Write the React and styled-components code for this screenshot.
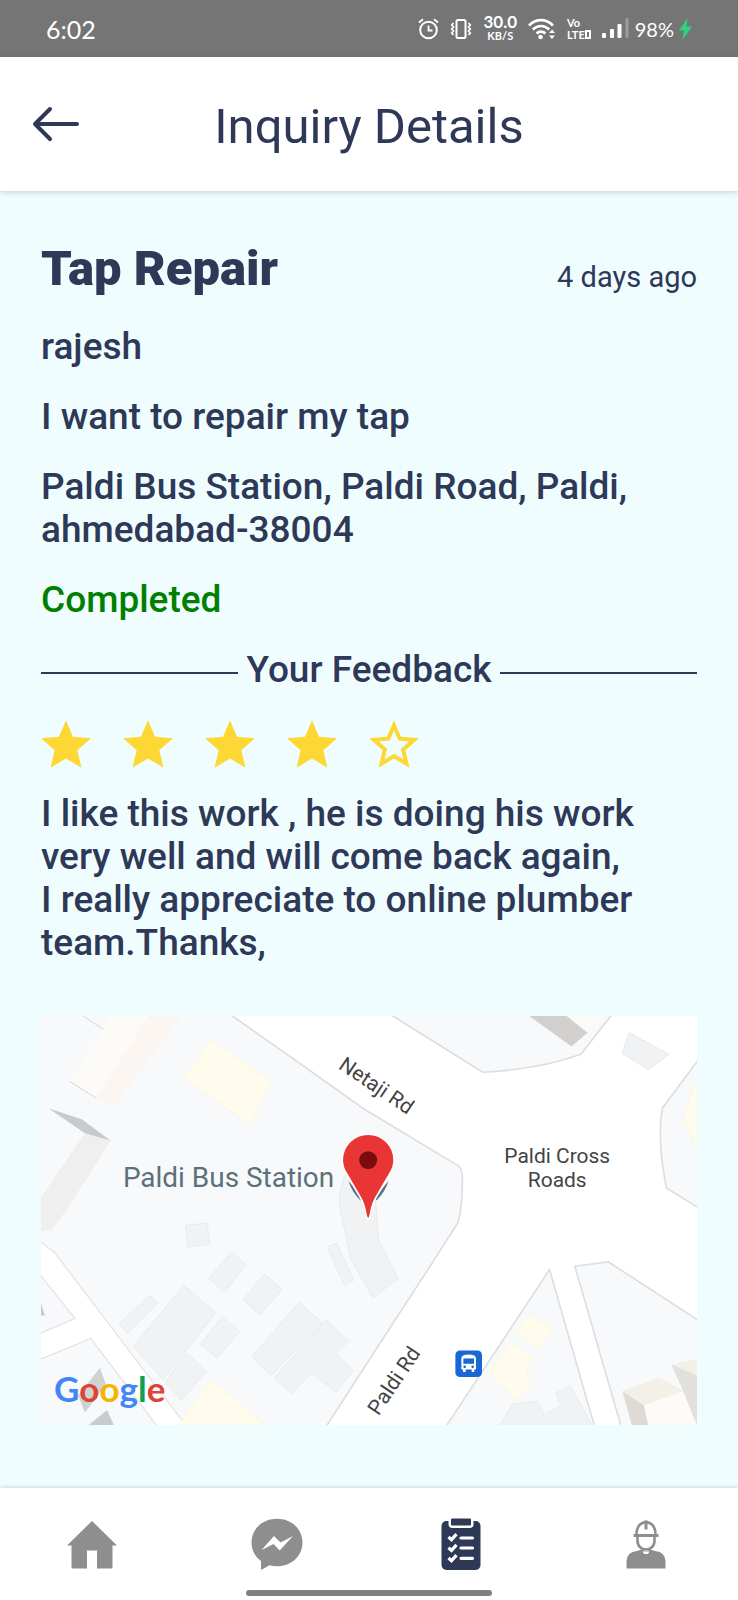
import React from "react"
import styled, { createGlobalStyle } from "styled-components"

const GlobalStyle = createGlobalStyle`
  * {
    box-sizing: border-box;
  }

  body {
    margin: 0;
    background: #f0fdff;
    color: #2e3857;
    font-family: Roboto, "Liberation Sans", sans-serif;
  }
`

const Page = styled.div`
  min-height: 100vh;
  display: flex;
  flex-direction: column;
`

/* status bar */

const StatusBar = styled.div`
  height: 57px;
  padding: 0 46px;
  display: flex;
  align-items: center;
  justify-content: space-between;
  background: #757575;
  color: #fff;
  font-family: Lato, sans-serif;
`

const Clock = styled.span`
  font-size: 25px;
  line-height: 32px;
`

const StatusIcons = styled.div`
  display: flex;
  align-items: center;
  gap: 11px;
`

const Stacked = styled.span`
  display: flex;
  flex-direction: column;
  align-items: ${(props) => props.$align || "center"};
  font-size: 11px;
  line-height: ${(props) => props.$line}px;
  font-weight: 700;
`

const Speed = styled.span`
  font-size: 17px;
`

const LteRow = styled.span`
  display: flex;
  align-items: center;
`

const SimBox = styled.span`
  width: 6px;
  height: 9px;
  border: 2px solid #fff;
`

const Battery = styled.span`
  display: flex;
  align-items: center;
  gap: 5px;
  font-size: 20px;
  line-height: 24px;
`

const SignalGroup = styled.span`
  display: flex;
  align-items: center;
  gap: 6px;
`

/* header */

const Header = styled.header`
  height: 134px;
  padding: 0 28px;
  display: grid;
  grid-template-columns: 1fr auto 1fr;
  align-items: center;
  position: relative;
  background: #fff;
  box-shadow: 0 1px 6px rgba(40, 80, 80, 0.25);
`

const BackButton = styled.button`
  justify-self: start;
  display: flex;
  padding: 4px;
  border: 0;
  background: none;
  color: #2e3857;
  cursor: pointer;
`

const Title = styled.h1`
  margin: 0;
  padding-top: 6px;
  font-size: 49px;
  line-height: 58px;
  font-weight: 400;
`

/* details */

const Content = styled.main`
  flex: 1;
  padding: 49px 41px 62px;
`

const Details = styled.section`
  display: flex;
  flex-direction: column;
  gap: 27px;
`

const TitleRow = styled.div`
  display: flex;
  align-items: flex-end;
  justify-content: space-between;
`

const Service = styled.h2`
  margin: 0;
  font-size: 49px;
  line-height: 58px;
  font-weight: 900;
`

const Ago = styled.time`
  font-size: 29px;
  line-height: 42px;
`

const Text = styled.p`
  margin: 0;
  font-size: 37px;
  line-height: 43px;
  font-weight: 500;
  white-space: pre-line;
  color: ${(props) => props.$color || "inherit"};
`

const Divider = styled.div`
  display: flex;
  align-items: center;
  gap: 8px;
  padding-bottom: 2px;

  &::before,
  &::after {
    content: "";
    flex: 1;
    height: 2px;
    margin-top: 6px;
    background: #2e3857;
  }
`

const DividerTitle = styled.h3`
  margin: 0;
  font-size: 37px;
  line-height: 43px;
  font-weight: 500;
`

const Stars = styled.div`
  display: flex;
  gap: 32px;
  margin-bottom: -3px;
`

const MapBox = styled.div`
  margin-top: 52px;

  svg {
    display: block;
    width: 100%;
    height: auto;
  }
`

const MapLabel = styled.text`
  font-family: Roboto, "Liberation Sans", sans-serif;
  font-size: ${(props) => props.$size || 21}px;
  fill: ${(props) => props.$color || "#444"};
  text-anchor: ${(props) => props.$anchor || "start"};
`

const GoogleMark = styled.text`
  font-family: Lato, sans-serif;
  font-size: 35px;
  font-weight: 700;
`

/* bottom tabs */

const Footer = styled.footer`
  height: 112px;
  display: flex;
  flex-direction: column;
  align-items: center;
  justify-content: space-between;
  position: relative;
  padding: 30px 0 4px;
  background: #fff;
  box-shadow: 0 -1px 4px rgba(40, 60, 60, 0.18);
`

const Tabs = styled.nav`
  width: 100%;
  display: grid;
  grid-template-columns: repeat(4, 1fr);
`

const Tab = styled.a`
  display: flex;
  justify-content: center;
  color: ${(props) => (props.$active ? "#2e3857" : "#8e8e8e")};
`

const HomeIndicator = styled.div`
  width: 33.3%;
  height: 6px;
  border-radius: 3px;
  background: #808080;
`

const AlarmIcon = () => (
  <svg width="21" height="22" viewBox="0 0 21 22" fill="none" stroke="#fff" strokeWidth="2">
    <circle cx="10.5" cy="12" r="8.3" />
    <path d="M10.5 7.5v5h4M1 4.5 5 1.3M20 4.5l-4-3.2" strokeWidth="1.8" />
  </svg>
)

const VibrateIcon = () => (
  <svg width="22" height="20" viewBox="0 0 22 20" fill="none" stroke="#fff">
    <rect x="6.5" y="1" width="9" height="18" rx="1.5" strokeWidth="2" />
    <path d="m3.5 4-1.8 2 1.8 2-1.8 2 1.8 2-1.8 2 1.8 2M18.5 4l1.8 2-1.8 2 1.8 2-1.8 2 1.8 2-1.8 2" strokeWidth="1.7" />
  </svg>
)

const WifiIcon = () => (
  <svg width="28" height="22" viewBox="0 0 28 22" fill="none" stroke="#fff" strokeWidth="2.7">
    <path d="M1 7.5c7-7.2 17-7.2 24 0M4.8 11.5c5-4.7 11.4-4.7 16.4 0M8.5 15.4c3-2.5 6-2.5 9 0" />
    <circle cx="12.5" cy="19" r="2.3" fill="#fff" stroke="none" />
    <path d="m21 15 3-3.5 3 3.5zM21 17.5l3 3.5 3-3.5z" fill="#fff" stroke="none" />
  </svg>
)

const SignalIcon = () => (
  <svg width="27" height="21" viewBox="0 0 27 21" fill="#fff">
    <rect x="0" y="15" width="4" height="5" rx="1" />
    <rect x="8" y="11" width="4" height="9" rx="1" />
    <rect x="15.5" y="6" width="4" height="14" rx="1" />
    <rect x="23.5" y="0" width="3" height="20" rx="1" opacity="0.3" />
  </svg>
)

const BoltIcon = () => (
  <svg width="13" height="22" viewBox="0 0 13 22" fill="#2fd27e">
    <path d="M8.5 0 0 12.5h5L3.5 22 13 8.5H7.5z" />
  </svg>
)

const BackIcon = () => (
  <svg width="48" height="36" viewBox="0 0 48 36" fill="none" stroke="currentColor" strokeWidth="4" strokeLinecap="round" strokeLinejoin="round">
    <path d="M45 18H3M18 3 3 18l15 15" />
  </svg>
)

const HomeIcon = () => (
  <svg width="50" height="54" viewBox="0 0 50 54" fill="currentColor">
    <path d="M25 3 50 27.5h-4.5V49q0 1.5-1.5 1.5H30V32.5H20v18H6q-1.5 0-1.5-1.5V27.5H0z" />
  </svg>
)

const MessengerIcon = () => (
  <svg width="52" height="54" viewBox="0 0 52 54">
    <path
      d="M26 .8C11.5.8.5 11 .5 24.5c0 7.5 3.5 14 9.5 18.5v9l8.5-4.7c2.3.7 4.8 1 7.5 1C40.5 48.3 51.5 38 51.5 24.5S40.5.8 26 .8z"
      fill="currentColor"
    />
    <path d="M10.5 32 23 18l6.5 6.5L42 18 28.7 32.5 22.5 26z" fill="#fff" />
  </svg>
)

const ClipboardIcon = () => (
  <svg width="40" height="54" viewBox="0 0 40 54">
    <rect x="0.5" y="3" width="39" height="49" rx="5" fill="currentColor" />
    <path d="M7.5 0h25v6q0 4-4 4h-17q-4 0-4-4z" fill="#fff" />
    <rect x="10" y="0.5" width="20" height="7" rx="1" fill="currentColor" />
    <g fill="none" stroke="#fff" strokeWidth="3.2">
      <path d="m7.5 19 3 2.7 5-5.5M7.5 29.7l3 2.7 5-5.5M7.5 40l3 2.7 5-5.5" />
      <path d="M20 20h11.5M20 30h11.5M20 40.3h11.5" strokeLinecap="round" />
    </g>
  </svg>
)

const WorkerIcon = () => (
  <svg width="40" height="54" viewBox="0 0 40 54" fill="none" stroke="currentColor">
    <path d="M.5 50.5v-7Q.5 34 11 33l4.500-1.500 4.500 2 4.500-2L29 33q10.500 1 10.500 10.500v7z" fill="currentColor" stroke="none" />
    <path d="M11.5 18v4.500c0 12 17 12 17 0V18" fill="#fff" strokeWidth="2.6" />
    <path d="M10.5 16.5c0-16.500 19-16.500 19 0" strokeWidth="2.6" />
    <path d="M7.5 17.5h25" strokeWidth="3" />
    <path d="M20 2.5v9" strokeWidth="3" />
    <path d="M16.5 33.5h7l-1.500 2.500h-4z" fill="#fff" stroke="none" />
  </svg>
)

const Star = ({ filled }) => (
  <svg width="50" height="48" viewBox="2 2 20 19" fill="#fdd835" aria-hidden="true">
    {filled ? (
      <path d="M12 17.27 18.18 21l-1.64-7.03L22 9.24l-7.19-.61L12 2 9.19 8.63 2 9.24l5.46 4.73L5.82 21z" />
    ) : (
      <path d="m22 9.24-7.19-.62L12 2 9.19 8.63 2 9.24l5.46 4.73L5.82 21 12 17.27 18.18 21l-1.63-7.03L22 9.24zM12 15.4l-3.76 2.27 1-4.28-3.32-2.88 4.38-.38L12 6.1l1.71 4.04 4.38.38-3.32 2.88 1 4.28L12 15.4z" />
    )}
  </svg>
)

const greyBuildings = [
  "434,629 499,622 507,685 442,694",
  "572,710 617,747 552,829 504,789",
  "672,775 724,822 657,898 607,852",
  "327,840 352,862 259,954 235,925",
  "429,809 525,892 367,1092 277,992",
  "544,904 597,947 529,1028 479,987",
  "437,1012 497,1067 422,1155 372,1102",
  "775,860 847,922 692,1080 634,1024",
  "857,914 924,977 887,1014 939,1065 887,1130 812,1072 752,1134 700,1087",
  "889,682 939,794 912,810 860,694",
  "912,480 897,540 899,582 932,732 997,847 1072,790 1015,672 1007,582 1000,500",
  "1377,1230 1417,1167 1490,1157 1512,1197 1562,1172 1547,1132 1590,1112 1657,1230",
  "1767,50 1887,115 1825,162 1745,112",
]

const yellowBuildings = [
  "512,72 689,197 627,327 432,187",
  "512,1092 675,1230 412,1230",
  "1472,897 1539,940 1497,999 1427,952",
  "1409,982 1477,1027 1457,1067 1479,1102 1430,1150 1342,1072",
  "1971,200 1962,207 1930,312 1967,387 1971,387",
]

const MapDrawing = () => (
  <svg viewBox="0 0 657 410" role="img" aria-label="Map of Paldi Bus Station">
    <svg width="657" height="410" viewBox="0 0 1971 1230">
      <rect width="1971" height="1230" fill="#fff" />
      <g fill="#f8f9fb" stroke="#dddee1" strokeWidth="5">
        <path d="M-9-9H561L575 0 777 142 967 277 1250 448Q1265 455 1266 485 1266 580 1252 622L1172 747 987 1032 859 1230V1240H-9z" />
        <path d="M1043-9 1057 0 1327 169Q1500 160 1622 115L1712 0V-9z" />
        <path d="M1980 125 1867 277Q1850 370 1879 517L1980 579z" />
        <path d="M1528 762 1219 1230V1240H1665z" />
        <path d="M1604 752 1705 739 1980 918V1240H1745z" />
      </g>
      <path d="M-9 672 0 679 42 712 435 1230V1240H-9z" fill="#fff" stroke="#e3e4e7" strokeWidth="4" />
      <g fill="#f8f9fb" stroke="#e3e4e7" strokeWidth="4">
        <path d="M-9 770 102 909-9 956z" />
        <path d="M-9 1034 150 969 347 1230V1240H-9z" />
      </g>
      <g fill="#f1f2f3" stroke="#e9eaeb" strokeWidth="3">
        {greyBuildings.map((points) => (
          <polygon key={points} points={points} />
        ))}
      </g>
      <g fill="#fffcee" stroke="#fbf6dc" strokeWidth="3">
        {yellowBuildings.map((points) => (
          <polygon key={points} points={points} />
        ))}
      </g>

      <polygon points="202,0 322,0 167,247 87,197 187,40" fill="#fcfbf8" />
      <polygon points="322,0 422,0 222,267 167,247" fill="#fcf6f3" />
      <path d="M127 0 187 40M87 197 167 247" stroke="#d5d6d7" strokeWidth="3" />
      <polygon points="132,352 210,375 77,582 32,642 0,647 0,545" fill="#efefef" />
      <polygon points="22,277 122,310 210,375 132,352" fill="#c9cacb" />
      <polygon points="0,864 12,900 0,900" fill="#ccc" />
      <polygon points="177,1057 195,1107 132,1192 112,1140" fill="#d0d1d3" />
      <polygon points="199,1184 219,1230 142,1230" fill="#c9cbcd" />

      <polygon points="1579,0 1642,50 1687,0" fill="#fbfaf6" />
      <polygon points="1467,0 1594,92 1642,50 1579,0" fill="#d2d0ce" />
      <polygon points="1747,1127 1857,1087 1932,1127 1812,1170" fill="#f3f0e8" />
      <polygon points="1747,1127 1812,1170 1825,1230 1775,1230" fill="#dedbd7" />
      <polygon points="1812,1170 1932,1127 1967,1230 1825,1230" fill="#fcfbf7" />
      <polygon points="1894,1047 1971,1030 1971,1080" fill="#f3f0e8" />
      <polygon points="1894,1047 1971,1080 1971,1230 1925,1117" fill="#e2e0dc" />

      <path d="M924 496Q934 530 960 554L966 546zM1044 496Q1034 530 1008 554L1002 546z" fill="#557487" />
      <path
        d="M983 609C973 609 979 578 960 546L918 474Q905 455 905 433a78 78 0 0 1 156 0Q1061 455 1048 474L1006 546C987 578 993 609 983 609z"
        fill="#ea3535"
        stroke="#fff"
        strokeWidth="5"
      />
      <circle cx="983" cy="433" r="27" fill="#7b0c0d" />

      <rect x="1245" y="1005" width="80" height="80" rx="14" fill="#1967d2" />
      <path d="M1263 1029q0-12 22-12t22 12v33h-5v8h-8v-8h-18v8h-8v-8h-5z" fill="#fff" />
      <path d="M1269 1029h32v16h-32z" fill="#1967d2" />
      <circle cx="1273" cy="1054" r="4" fill="#1967d2" />
      <circle cx="1297" cy="1054" r="4" fill="#1967d2" />
    </svg>

    <MapLabel x="82" y="171" $size={28} $color="#5a7179">Paldi Bus Station</MapLabel>
    <MapLabel x="517" y="147" $anchor="middle">Paldi Cross</MapLabel>
    <MapLabel x="517" y="171" $anchor="middle">Roads</MapLabel>
    <MapLabel transform="translate(297 52) rotate(34)">Netaji Rd</MapLabel>
    <MapLabel transform="translate(338 401) rotate(-56)">Paldi Rd</MapLabel>
    <GoogleMark x="13" y="387">
      <tspan fill="#4285f4">G</tspan>
      <tspan fill="#db4437">o</tspan>
      <tspan fill="#f4b400">o</tspan>
      <tspan fill="#4285f4">g</tspan>
      <tspan fill="#0f9d58">l</tspan>
      <tspan fill="#db4437">e</tspan>
    </GoogleMark>
  </svg>
)

const rating = 4

const feedback = `I like this work , he is doing his work very well and will come back again,
I really appreciate to online plumber team.Thanks,`

const tabs = [
  { name: "Home", href: "#home", Icon: HomeIcon },
  { name: "Messages", href: "#messages", Icon: MessengerIcon },
  { name: "Inquiries", href: "#inquiries", Icon: ClipboardIcon, active: true },
  { name: "Profile", href: "#profile", Icon: WorkerIcon },
]

export default function App() {
  return (
    <Page>
      <GlobalStyle />
      <StatusBar>
        <Clock>6:02</Clock>
        <StatusIcons>
          <AlarmIcon />
          <VibrateIcon />
          <Stacked $line={14}>
            <Speed>30.0</Speed>
            <span>KB/S</span>
          </Stacked>
          <WifiIcon />
          <Stacked $line={12} $align="flex-start">
            <span>Vo</span>
            <LteRow>
              LTE
              <SimBox />
            </LteRow>
          </Stacked>
          <SignalGroup>
            <SignalIcon />
            <Battery>
              98%
              <BoltIcon />
            </Battery>
          </SignalGroup>
        </StatusIcons>
      </StatusBar>

      <Header>
        <BackButton type="button" aria-label="Back">
          <BackIcon />
        </BackButton>
        <Title>Inquiry Details</Title>
      </Header>

      <Content>
        <Details>
          <TitleRow>
            <Service>Tap Repair</Service>
            <Ago>4 days ago</Ago>
          </TitleRow>
          <Text>rajesh</Text>
          <Text>I want to repair my tap</Text>
          <Text>Paldi Bus Station, Paldi Road, Paldi, ahmedabad-38004</Text>
          <Text $color="#008000">Completed</Text>
          <Divider>
            <DividerTitle>Your Feedback</DividerTitle>
          </Divider>
          <Stars role="img" aria-label={`${rating} out of 5 stars`}>
            {[1, 2, 3, 4, 5].map((n) => (
              <Star key={n} filled={n <= rating} />
            ))}
          </Stars>
          <Text>{feedback}</Text>
        </Details>
        <MapBox>
          <MapDrawing />
        </MapBox>
      </Content>

      <Footer>
        <Tabs>
          {tabs.map(({ name, href, Icon, active }) => (
            <Tab key={name} href={href} aria-label={name} $active={active}>
              <Icon />
            </Tab>
          ))}
        </Tabs>
        <HomeIndicator />
      </Footer>
    </Page>
  )
}
